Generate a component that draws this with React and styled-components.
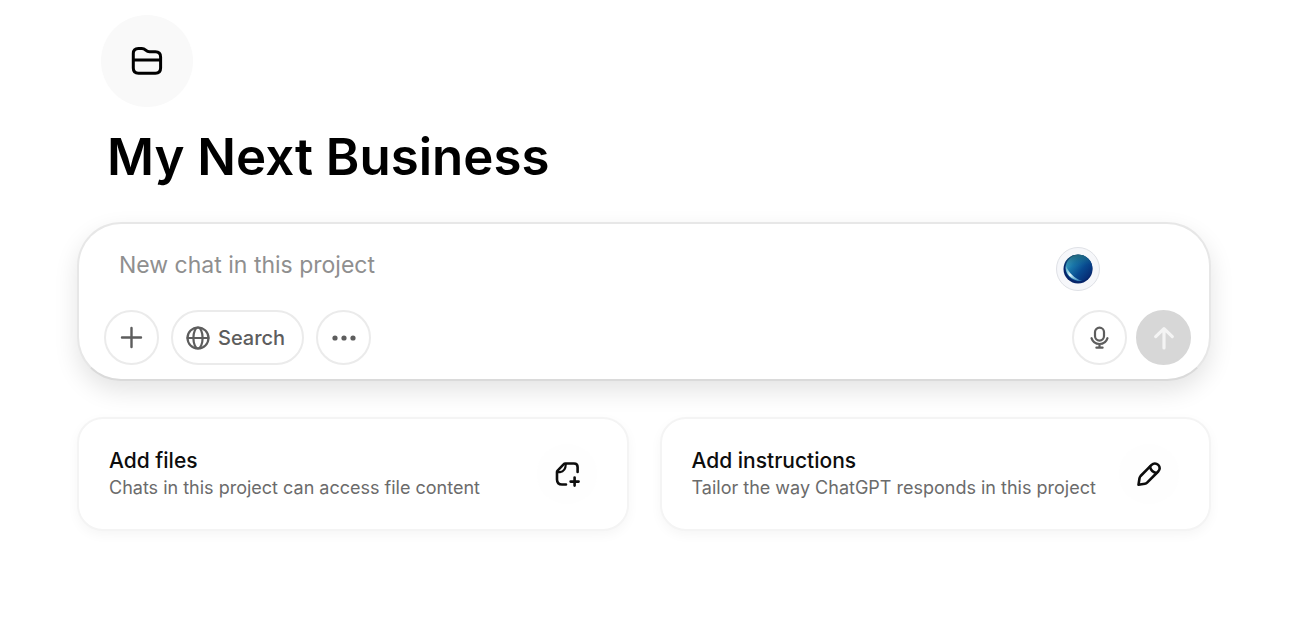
import React, { useState } from "react";
import styled, { createGlobalStyle } from "styled-components";

const GlobalStyle = createGlobalStyle`
  *, *::before, *::after {
    box-sizing: border-box;
  }

  body {
    margin: 0;
    background: #fff;
    color: #0d0d0d;
    font-family: Inter, "Liberation Sans", sans-serif;
  }

  button, input {
    font: inherit;
    color: inherit;
  }

  svg {
    display: block;
    flex-shrink: 0;
  }
`;

const Page = styled.main`
  padding: 15px 81px 48px 77px;
`;

const Header = styled.header`
  padding: 0 24px;
`;

const FolderButton = styled.button`
  display: flex;
  align-items: center;
  justify-content: center;
  width: 92px;
  height: 92px;
  padding: 0;
  border: 0;
  border-radius: 50%;
  background: #f9f9f9;
  color: #000;
  cursor: pointer;
`;

const Title = styled.h1`
  margin: 16px 0 0;
  padding-left: 6px;
  color: #000;
  font-size: 51px;
  line-height: 68px;
  font-weight: 600;
`;

const Composer = styled.form`
  position: relative;
  margin-top: 31px;
  padding: 19px 18px 14px 25px;
  border: 2px solid #e7e7e7;
  border-bottom-color: #dadada;
  border-radius: 44px;
  background: #fff;
  box-shadow: 0 10px 24px rgba(0, 0, 0, 0.11);
`;

const PromptInput = styled.input`
  display: block;
  width: 100%;
  height: 44px;
  padding: 0 120px 0 15px;
  border: 0;
  outline: none;
  background: transparent;
  font-size: 23px;

  &::placeholder {
    color: #8f8f8f;
    opacity: 1;
  }
`;

const OrbButton = styled.button`
  position: absolute;
  top: 23px;
  right: 109px;
  display: flex;
  align-items: center;
  justify-content: center;
  width: 44px;
  height: 44px;
  padding: 0;
  border: 1px solid #dfe1e6;
  border-radius: 50%;
  background: #f6f7fa;
  cursor: pointer;
`;

const Toolbar = styled.div`
  display: flex;
  align-items: center;
  justify-content: space-between;
  margin-top: 23px;
`;

const ToolGroup = styled.div`
  display: flex;
  gap: ${({ $gap }) => $gap};
`;

const ToolButton = styled.button`
  display: flex;
  align-items: center;
  justify-content: center;
  gap: 7px;
  min-width: 55px;
  height: 55px;
  padding: ${({ $wide }) => ($wide ? "0 17px 0 12px" : "0")};
  border: 2px solid #ebebeb;
  border-radius: 28px;
  background: #fff;
  color: #5d5d5d;
  font-size: 20px;
  font-weight: 500;
  cursor: pointer;
`;

const SendButton = styled(ToolButton)`
  border-color: #d7d7d7;
  background: #d7d7d7;
  color: #f4f4f4;
`;

const Cards = styled.div`
  display: grid;
  grid-template-columns: 1fr 1fr;
  gap: 31px;
  margin-top: 36px;
`;

const Card = styled.button`
  display: flex;
  align-items: center;
  justify-content: space-between;
  padding: 25px 30px;
  border: 2px solid #f4f4f4;
  border-radius: 26px;
  background: #fff;
  text-align: left;
  box-shadow: 0 4px 12px rgba(0, 0, 0, 0.04);
  cursor: pointer;
`;

const CardTitle = styled.div`
  color: #0d0d0d;
  font-size: 21px;
  line-height: 28px;
  font-weight: 500;
`;

const CardText = styled.div`
  color: #6b6b6b;
  font-size: 18px;
  line-height: 26px;
`;

const CardIcon = styled.div`
  display: flex;
  align-items: center;
  justify-content: center;
  flex-shrink: 0;
  width: 60px;
  height: 60px;
  border-radius: 50%;
  background: #fefefe;
`;

const Icon = ({ size, width = 2, children }) => (
  <svg
    width={size}
    height={size}
    viewBox={`0 0 ${size} ${size}`}
    fill="none"
    stroke="currentColor"
    strokeWidth={width}
    strokeLinecap="round"
    strokeLinejoin="round"
    aria-hidden="true"
  >
    {children}
  </svg>
);

const FolderIcon = () => (
  <Icon size={36} width={3}>
    <path d="M4.3 10.5Q4.3 5.4 9.4 5.4H12.8C17 5.4 16.4 8.7 20.6 8.7H26.4Q31.6 8.7 31.6 13.9V25Q31.6 30.2 26.4 30.2H9.5Q4.3 30.2 4.3 25Z" />
    <path d="M4.5 16.9H31.4" />
  </Icon>
);

const PlusIcon = () => (
  <Icon size={23} width={2.4}>
    <path d="M11.5 2V21M2 11.5H21" />
  </Icon>
);

const GlobeIcon = () => (
  <Icon size={26} width={2.2}>
    <circle cx="13" cy="13" r="10.5" />
    <ellipse cx="13" cy="13" rx="4.6" ry="10.5" />
    <path d="M2.5 13H23.5" />
  </Icon>
);

const DotsIcon = () => (
  <Icon size={26} width={0}>
    <g fill="currentColor">
      <circle cx="4" cy="13" r="2.6" />
      <circle cx="13" cy="13" r="2.6" />
      <circle cx="22" cy="13" r="2.6" />
    </g>
  </Icon>
);

const MicIcon = () => (
  <Icon size={25} width={2.2}>
    <rect x="8" y="2.6" width="9" height="13" rx="4.5" />
    <path d="M4.5 13.2C5.7 17 8.7 19 12.5 19S19.3 17 20.5 13.2M12.5 19V22.6M9.4 22.7H15.6" />
  </Icon>
);

const ArrowUpIcon = () => (
  <Icon size={26} width={3.2}>
    <path d="M13 23V4M4.7 11.6L13 3.6L21.3 11.6" />
  </Icon>
);

const AddFileIcon = () => (
  <Icon size={28} width={2.6}>
    <path d="M13 24.5H9Q4 24.5 4 19.5V12Q4 11.2 4.6 10.6L10.8 4.2Q11.4 3.5 12.3 3.5H21Q24.6 3.5 24.6 7.1V12" />
    <path d="M4.4 12.2H7Q12.6 11.4 12.8 4" strokeWidth="2.2" />
    <path d="M21.6 17.6V25.6M17.6 21.6H25.6" />
  </Icon>
);

const PencilIcon = () => (
  <Icon size={28} width={2.6}>
    <path d="M3.5 24.7L4.5 18.3Q4.7 17 5.6 16L16.6 4.9C18.5 3 21.2 3 23.2 4.9S25.1 9.6 23.2 11.5L12.1 22.6Q11.2 23.5 9.9 23.7Z" />
    <path d="M15 6.8Q16.3 11.7 21.2 13" />
  </Icon>
);

const OrbIcon = () => (
  <svg width="30" height="30" viewBox="0 0 30 30" aria-hidden="true">
    <defs>
      <linearGradient id="orbBody" x1="0.1" y1="0.2" x2="0.9" y2="0.85">
        <stop offset="0" stopColor="#3fa3c4" />
        <stop offset="0.25" stopColor="#1a78ab" />
        <stop offset="0.6" stopColor="#084a90" />
        <stop offset="1" stopColor="#062a72" />
      </linearGradient>
      <linearGradient id="orbTop" x1="0.4" y1="0" x2="0.5" y2="1">
        <stop offset="0" stopColor="#1f5f70" stopOpacity="0.9" />
        <stop offset="0.4" stopColor="#12618b" stopOpacity="0" />
      </linearGradient>
      <linearGradient id="orbGlow" x1="0" y1="0" x2="0.8" y2="1">
        <stop offset="0" stopColor="#6fc4dc" stopOpacity="0.4" />
        <stop offset="0.5" stopColor="#e2f8fb" />
        <stop offset="1" stopColor="#58b8da" stopOpacity="0.6" />
      </linearGradient>
    </defs>
    <circle cx="15" cy="15" r="14.5" fill="#06256a" />
    <ellipse cx="16" cy="14" rx="13.4" ry="13.2" fill="url(#orbBody)" />
    <circle cx="15" cy="15" r="14.5" fill="url(#orbTop)" />
    <path
      d="M2.6 11C1.6 19 8.5 27.5 19 27C11.5 24.5 5.8 19 2.6 11Z"
      fill="url(#orbGlow)"
    />
  </svg>
);

const cards = [
  {
    title: "Add files",
    text: "Chats in this project can access file content",
    icon: <AddFileIcon />,
  },
  {
    title: "Add instructions",
    text: "Tailor the way ChatGPT responds in this project",
    icon: <PencilIcon />,
  },
];

const App = () => {
  const [prompt, setPrompt] = useState("");

  const handleSubmit = (e) => {
    e.preventDefault();
    setPrompt("");
  };

  return (
    <>
      <GlobalStyle />
      <Page>
        <Header>
          <FolderButton type="button" aria-label="Project icon">
            <FolderIcon />
          </FolderButton>
          <Title>My Next Business</Title>
        </Header>
        <Composer onSubmit={handleSubmit}>
          <PromptInput
            type="text"
            aria-label="New chat in this project"
            placeholder="New chat in this project"
            value={prompt}
            onChange={(e) => setPrompt(e.target.value)}
          />
          <OrbButton type="button" aria-label="Assistant">
            <OrbIcon />
          </OrbButton>
          <Toolbar>
            <ToolGroup $gap="12px">
              <ToolButton type="button" aria-label="Add">
                <PlusIcon />
              </ToolButton>
              <ToolButton type="button" $wide>
                <GlobeIcon />
                Search
              </ToolButton>
              <ToolButton type="button" aria-label="More">
                <DotsIcon />
              </ToolButton>
            </ToolGroup>
            <ToolGroup $gap="9px">
              <ToolButton type="button" aria-label="Dictate">
                <MicIcon />
              </ToolButton>
              <SendButton type="submit" aria-label="Send">
                <ArrowUpIcon />
              </SendButton>
            </ToolGroup>
          </Toolbar>
        </Composer>
        <Cards>
          {cards.map((card) => (
            <Card type="button" key={card.title}>
              <div>
                <CardTitle>{card.title}</CardTitle>
                <CardText>{card.text}</CardText>
              </div>
              <CardIcon>{card.icon}</CardIcon>
            </Card>
          ))}
        </Cards>
      </Page>
    </>
  );
};

export default App;
